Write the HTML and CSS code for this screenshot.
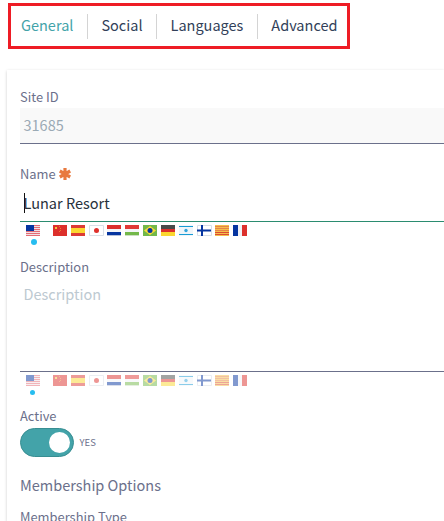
FILE: index.html
```html
<!DOCTYPE html>
<html lang="en">
<head>
<meta charset="utf-8">
<title>Site settings</title>
<link rel="stylesheet" href="styles.css">
</head>
<body>
<svg class="defs" width="0" height="0" aria-hidden="true">
  <symbol id="us" viewBox="0 0 14 11"><path fill="#f1dfe3" d="M0 0h14v11H0z"/><path fill="#e46c75" d="M0 0h14v1H0zM0 2h14v1H0zM0 4h14v1H0zM0 6h14v1H0zM0 8h14v1H0zM0 10h14v1H0z"/><path fill="#0635a0" d="M0 0h8v6H0z"/></symbol>
  <symbol id="cn" viewBox="0 0 14 11"><path fill="#dc302b" d="M0 0h14v11H0z"/><path fill="#f5c638" d="M2 2h2v2H2z"/><path fill="#ec7b32" d="M6 1h1v1H6zM7 3h1v1H7zM7 5h1v1H7zM6 6h1v1H6z"/></symbol>
  <symbol id="es" viewBox="0 0 14 11"><path fill="#dc3b35" d="M0 0h14v11H0z"/><path fill="#fbd730" d="M0 3h14v5H0z"/></symbol>
  <symbol id="jp" viewBox="0 0 15 11"><path fill="#fff" stroke="#d8dfe7" d="M.5.5h14v10H.5z"/><circle cx="7.5" cy="5.5" r="2.5" fill="#df302c"/></symbol>
  <symbol id="nl" viewBox="0 0 14 11"><path fill="#f3f5f8" d="M0 0h14v11H0z"/><path fill="#dc302c" d="M0 0h14v4H0z"/><path fill="#0635a0" d="M0 7h14v3H0z"/><path fill="#b4bfd9" d="M0 10h14v1H0z"/></symbol>
  <symbol id="hu" viewBox="0 0 14 11"><path fill="#f3f5f8" d="M0 0h14v11H0z"/><path fill="#e03a37" d="M0 0h14v4H0z"/><path fill="#73b84a" d="M0 7h14v3H0z"/><path fill="#cbe0c2" d="M0 10h14v1H0z"/></symbol>
  <symbol id="br" viewBox="0 0 14 11"><path fill="#73b84a" d="M0 0h14v11H0z"/><path fill="#fbdd36" d="m7 1 6 4.5L7 10 1 5.5z"/><circle cx="7" cy="5.5" r="2.5" fill="#0635a0"/></symbol>
  <symbol id="de" viewBox="0 0 14 11"><path fill="#dc302c" d="M0 0h14v11H0z"/><path fill="#484b4a" d="M0 0h14v4H0z"/><path fill="#fbd730" d="M0 7h14v4H0z"/></symbol>
  <symbol id="ar" viewBox="0 0 14 11"><path fill="#f0f5f9" d="M0 0h14v11H0z"/><path fill="#189bd4" d="M0 1h14v1H0zM0 9h14v1H0z"/><circle cx="7" cy="5.5" r="1.7" fill="#32a6dc"/></symbol>
  <symbol id="fi" viewBox="0 0 15 11"><path fill="#fff" stroke="#d8dfe7" d="M.5.5h14v10H.5z"/><path fill="#0635a0" d="M4 0h2v11H4zM0 4.5h14v2H0z"/></symbol>
  <symbol id="ct" viewBox="0 0 14 11"><path fill="#f4c04b" d="M0 0h14v11H0z"/><path fill="#e6834a" d="M0 1h14v1H0zM0 3h14v1H0zM0 5h14v1H0z"/><path fill="#dc4a34" d="M0 7h14v1H0zM0 9h14v1H0z"/></symbol>
  <symbol id="fr" viewBox="0 0 14 11"><path fill="#f0f2f6" d="M0 0h14v11H0z"/><path fill="#0635a0" d="M0 0h5v11H0z"/><path fill="#dc302c" d="M9 0h5v11H9z"/></symbol>
  <symbol id="flag-row" viewBox="0 0 221 11">
    <use href="#us" width="14" height="11"/><use href="#cn" x="27" width="14" height="11"/><use href="#es" x="45" width="14" height="11"/><use href="#jp" x="63" width="15" height="11"/><use href="#nl" x="81" width="14" height="11"/><use href="#hu" x="99" width="14" height="11"/><use href="#br" x="117" width="14" height="11"/><use href="#de" x="135" width="14" height="11"/><use href="#ar" x="153" width="14" height="11"/><use href="#fi" x="171" width="15" height="11"/><use href="#ct" x="189" width="14" height="11"/><use href="#fr" x="207" width="14" height="11"/>
  </symbol>
</svg>
<nav class="tabs">
  <a class="tab active">General</a>
  <a class="tab">Social</a>
  <a class="tab">Languages</a>
  <a class="tab">Advanced</a>
</nav>
<main class="card">
  <section class="field site">
    <div class="label">Site ID</div>
    <div class="input disabled">31685</div>
  </section>
  <section class="field name">
    <div class="label">Name <svg class="required" width="12" height="12" viewBox="0 0 12 12"><path d="M6 0v12M.8 3l10.4 6M.8 9l10.4-6" stroke="#e8793e" stroke-width="3.2"/></svg></div>
    <div class="input focused"><i class="caret"></i>Lunar Resort</div>
    <svg class="flags" width="221" height="11"><use href="#flag-row"/></svg>
    <div class="dot"></div>
  </section>
  <section class="field description">
    <div class="label">Description</div>
    <div class="input area">Description</div>
    <svg class="flags faded" width="221" height="11"><use href="#flag-row"/></svg>
    <div class="dot small"></div>
  </section>
  <section class="field">
    <div class="label">Active</div>
    <div class="switch-row"><span class="switch"><i class="knob"></i></span><span class="yes">YES</span></div>
  </section>
  <h2 class="heading">Membership Options</h2>
  <div class="label type">Membership Type</div>
</main>
</body>
</html>
```
FILE: styles.css
```css
* { box-sizing: border-box; }
html { height: 521px; overflow: hidden; }
body { margin: 0; height: 521px; overflow: hidden; background: #fff; font-family: "Noto Sans CJK SC", "Noto Sans", sans-serif; color: #6b708b; display: flex; flex-direction: column; align-items: stretch; }
.defs { position: absolute; }
.tabs { flex: none; width: 342px; height: 46px; margin: 3px 0 0 8px; border: 3px solid #ee1c25; display: flex; align-items: center; padding-left: 10px; }
.tab { height: 25px; line-height: 22px; font-size: 14.5px; color: #323f59; padding-right: 13.5px; margin-right: 13.5px; border-right: 1px solid #d4d4d4; white-space: nowrap; }
.tab.active { color: #43a3a9; }
.tab:last-child { border: 0; margin: 0; padding: 0; }
.card { flex: 1; min-height: 0; margin: 21px 0 0 7px; padding: 18px 0 0 13px; box-shadow: 0 1px 3px rgba(0,0,0,.2); }
.label { height: 18px; line-height: 18px; font-size: 12.9px; white-space: nowrap; }
.field.site { height: 77px; }
.field.name { height: 93px; }
.field.description { height: 149px; }
.input { margin-top: 2px; height: 36px; border-bottom: 1px solid #6b708b; padding-left: 3.5px; line-height: 34px; font-size: 14.5px; }
.disabled { background: #f9f9f9; color: #9baab5; }
.focused { margin-top: 3px; padding-left: 4px; align-items: flex-start; border-color: #2b8c70; color: #27313b; display: flex; }
.caret { width: 1px; height: 20px; margin: 7px -1.5px 0 0; background: #111; }
.area { margin-top: 4px; height: 92px; line-height: 28px; color: #bdc9d1; }
.required { vertical-align: -1px; }
.flags { display: block; margin: 3px 0 0 6px; }
.faded { opacity: .5; }
.dot { width: 6px; height: 6px; margin: 3px 0 0 10.5px; border-radius: 50%; background: #27bdf0; }
.dot.small { width: 5px; height: 5px; margin: 3.5px 0 0 10px; }
.switch-row { display: flex; align-items: center; height: 29px; margin-top: 3px; }
.switch { width: 54px; height: 29px; border: 1px solid #388e92; border-radius: 15px; background: #43a3a9; padding: 3px; display: flex; justify-content: flex-end; }
.knob { width: 21px; height: 21px; border-radius: 50%; background: #fff; }
.yes { margin: 0 0 1px 5.5px; font-size: 9.5px; line-height: 14px; }
.heading { margin: 18px 0 0; height: 22px; line-height: 20px; font-size: 14.5px; font-weight: 400; }
.type { margin-top: 11px; }
```
